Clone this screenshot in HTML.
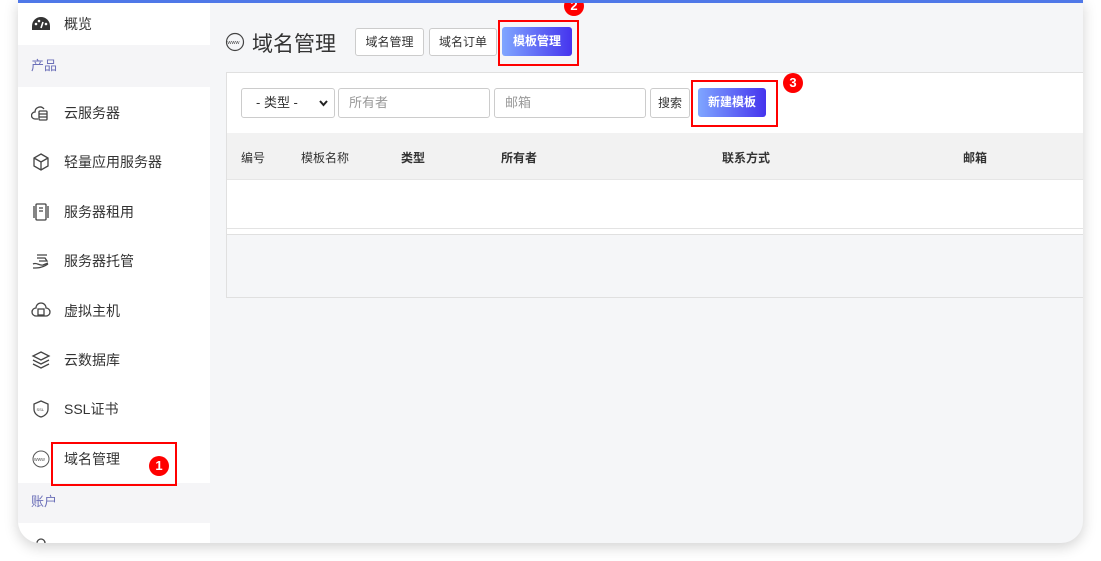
<!DOCTYPE html><html><head><meta charset="utf-8"><style>
*{box-sizing:border-box;margin:0;padding:0}
body{width:1101px;height:561px;background:#fff;font-family:"Liberation Sans","Noto Sans CJK SC",sans-serif;position:relative;overflow:hidden;color:#333}
.win{position:absolute;left:18px;top:0;width:1065px;height:543px;background:#f5f6f8;border-radius:0 0 22px 22px;box-shadow:0 4px 14px rgba(0,0,0,.18);overflow:hidden}
.top{position:absolute;left:0;top:0;width:100%;height:3px;background:#4f78e8;z-index:2}
.side{position:absolute;left:0;top:0;width:192px;bottom:0;background:#fff}
.it{position:absolute;left:0;width:192px;height:20px;line-height:20px;font-size:14px;color:#333}
.it svg{position:absolute;left:13px;top:1px}
.it span{position:absolute;left:46px;top:0}
.hd{position:absolute;left:0;width:192px;background:#f5f5f7;color:#6b6fb8;font-size:13px;padding-left:13px}
.a{position:absolute}
.btn{position:absolute;border:1px solid #ccc;border-radius:3px;background:#fff;font-size:12px;text-align:center;color:#333}
.grad{background:linear-gradient(90deg,#7fa6ff,#4534ee);color:#fff;border:none;font-weight:bold}
.red{position:absolute;border:2px solid #f00}
.badge{position:absolute;width:20px;height:20px;border-radius:50%;background:#f00;color:#fff;font-weight:bold;font-size:13px;text-align:center;line-height:20px}
.inp{position:absolute;border:1px solid #ccc;border-radius:3px;background:#fff;font-size:13px;color:#999;padding-left:10px;line-height:28px;height:30px;top:88px}
.th{position:absolute;top:149px;font-size:12px;color:#333;font-weight:bold}
</style></head><body>
<div class="win"><div class="top"></div>
<div class="side">
<div class="it" style="top:14px"><svg width="20" height="18" viewBox="0 0 20 16"><path d="M10 1a9 9 0 0 0-9 9v4h18v-4a9 9 0 0 0-9-9z" fill="#333"/><circle cx="5" cy="8" r="1.3" fill="#fff"/><circle cx="8" cy="5" r="1.3" fill="#fff"/><circle cx="15" cy="8" r="1.3" fill="#fff"/><path d="M10 12l2-6" stroke="#fff" stroke-width="1.6"/></svg><span>概览</span></div>
<div class="hd" style="top:45px;height:42px;line-height:42px">产品</div>
<div class="it" style="top:103px"><svg width="20" height="18" fill="none" stroke="#444" stroke-width="1.3"><path d="M7 15H4a3 3 0 0 1 0-7 5 5 0 0 1 9-3"/><rect x="8" y="7" width="8" height="9" rx="1"/><path d="M8 10h8M8 13h8"/></svg><span>云服务器</span></div>
<div class="it" style="top:152px"><svg width="20" height="18" fill="none" stroke="#444" stroke-width="1.3"><path d="M10 1l7 4v8l-7 4-7-4V5z M3 5l7 4 7-4M10 9v8"/></svg><span>轻量应用服务器</span></div>
<div class="it" style="top:202px"><svg width="20" height="18" fill="none" stroke="#444" stroke-width="1.3"><rect x="5" y="1" width="10" height="16" rx="1"/><path d="M3 3v12M17 3v12M8 5h4M8 8h4"/></svg><span>服务器租用</span></div>
<div class="it" style="top:251px"><svg width="20" height="18" fill="none" stroke="#444" stroke-width="1.3"><path d="M2 12c4-2 6 2 10 1l5-2M2 16c5 0 9 0 15-4M6 3h10M6 6h8l2 3H8"/></svg><span>服务器托管</span></div>
<div class="it" style="top:301px"><svg width="20" height="18" fill="none" stroke="#444" stroke-width="1.3"><path d="M5 14a4 4 0 0 1 0-8 5 5 0 0 1 10 0 4 4 0 0 1 0 8z"/><rect x="7" y="7" width="6" height="6"/></svg><span>虚拟主机</span></div>
<div class="it" style="top:350px"><svg width="20" height="18" fill="none" stroke="#444" stroke-width="1.3"><path d="M10 1l8 4-8 4-8-4z M2 9l8 4 8-4M2 13l8 4 8-4"/></svg><span>云数据库</span></div>
<div class="it" style="top:399px"><svg width="20" height="18" fill="none" stroke="#444" stroke-width="1.3"><path d="M10 1l7 3v5c0 4-3 7-7 8-4-1-7-4-7-8V4z"/><text x="5.5" y="11" font-size="4" fill="#444" stroke="none">SSL</text></svg><span>SSL证书</span></div>
<div class="it" style="top:449px"><svg width="20" height="18" fill="none" stroke="#555" stroke-width="1"><circle cx="10" cy="9" r="8"/><text x="3" y="11" font-size="5" fill="#555" stroke="none">www</text></svg><span>域名管理</span></div>
<div class="hd" style="top:483px;height:40px;line-height:38px">账户</div>
<div class="it" style="top:536px"><svg width="20" height="18" fill="none" stroke="#444" stroke-width="1.3"><circle cx="10" cy="6" r="4"/></svg></div>
</div>
<div class="a" style="left:207px;top:32px"><svg width="20" height="20" fill="none" stroke="#444" stroke-width="1.2"><circle cx="10" cy="10" r="8.5"/><text x="2.5" y="12" font-size="5.5" fill="#444" stroke="none">www</text></svg></div>
<div class="a" style="left:234px;top:28px;font-size:21px;color:#333">域名管理</div>
<div class="btn" style="left:337px;top:28px;width:69px;height:28px;line-height:26px">域名管理</div>
<div class="btn" style="left:411px;top:28px;width:68px;height:28px;line-height:26px">域名订单</div>
<div class="btn grad" style="left:484px;top:27px;width:70px;height:29px;line-height:29px">模板管理</div>
<div class="a" style="left:208px;top:72px;width:857px;height:226px;background:#fff;border:1px solid #e0e0e0;border-right:none"></div>
<div class="inp" style="left:223px;width:94px;color:#333;padding-left:14px">- 类型 -<svg style="position:absolute;right:6px;top:11px" width="9" height="7"><path d="M1 1l3.5 4L8 1" fill="none" stroke="#222" stroke-width="2"/></svg></div>
<div class="inp" style="left:320px;width:152px">所有者</div>
<div class="inp" style="left:476px;width:152px">邮箱</div>
<div class="btn" style="left:632px;top:88px;width:40px;height:30px;line-height:28px">搜索</div>
<div class="btn grad" style="left:680px;top:88px;width:68px;height:29px;line-height:29px">新建模板</div>
<div class="a" style="left:209px;top:133px;width:856px;height:47px;background:#f2f2f2;border-bottom:1px solid #e6e6e6"></div>
<div class="th" style="left:223px;font-weight:normal">编号</div>
<div class="th" style="left:283px;font-weight:normal">模板名称</div>
<div class="th" style="left:383px">类型</div>
<div class="th" style="left:483px">所有者</div>
<div class="th" style="left:704px">联系方式</div>
<div class="th" style="left:945px">邮箱</div>
<div class="a" style="left:209px;top:228px;width:856px;height:1px;background:#e3e3e3"></div>
<div class="a" style="left:209px;top:234px;width:856px;height:63px;background:#f5f6f8;border-top:1px solid #e0e0e0"></div>
</div>
<div class="red" style="left:498px;top:20px;width:81px;height:46px"></div>
<div class="badge" style="left:564px;top:-4px">2</div>
<div class="red" style="left:691px;top:80px;width:87px;height:47px"></div>
<div class="badge" style="left:783px;top:73px">3</div>
<div class="red" style="left:51px;top:442px;width:126px;height:44px"></div>
<div class="badge" style="left:149px;top:456px">1</div>
</body></html>
